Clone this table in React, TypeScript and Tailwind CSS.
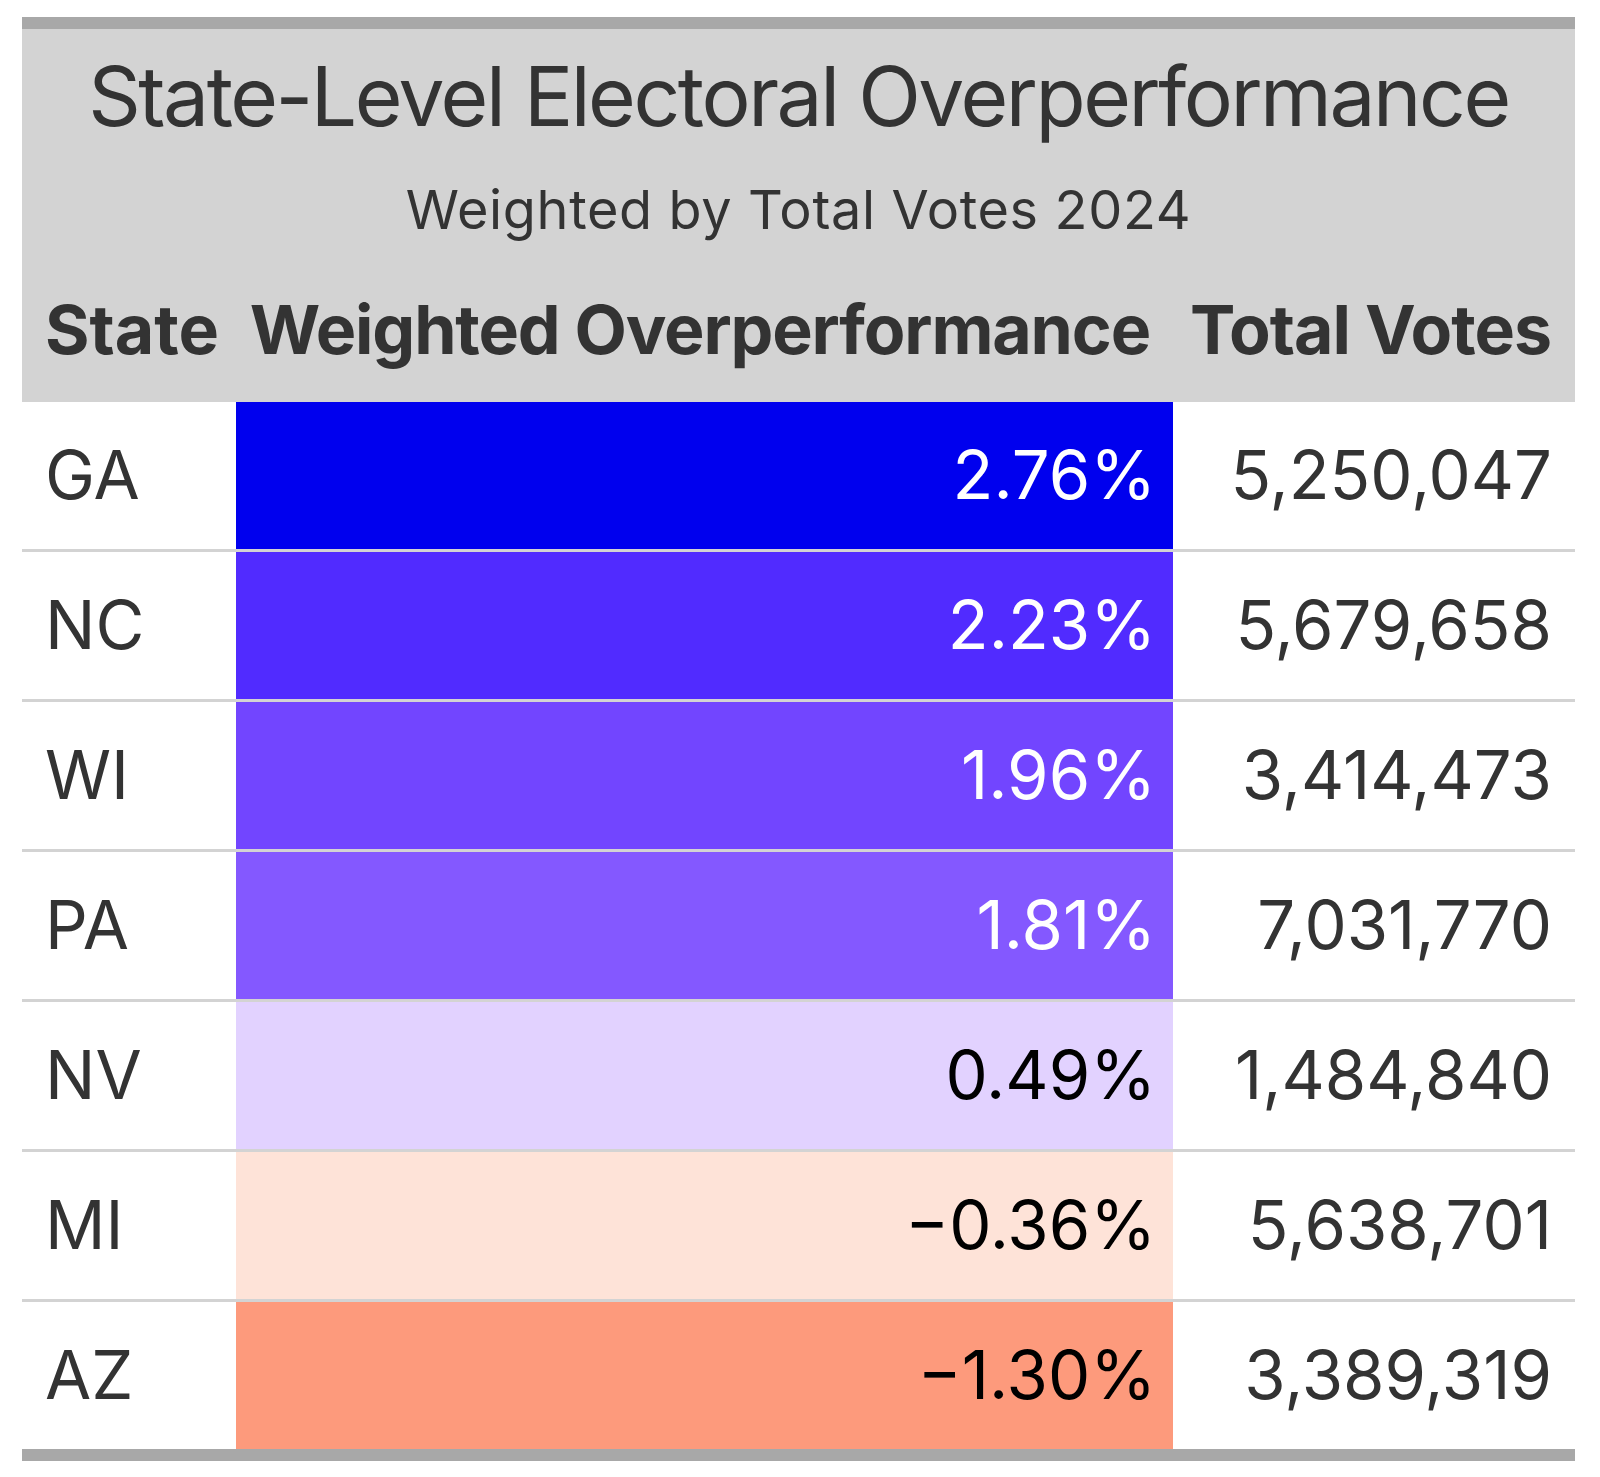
const rows = [
  { state: "GA", pct: "2.76%", votes: "5,250,047", bg: "bg-[#0000ee]", fg: "text-white" },
  { state: "NC", pct: "2.23%", votes: "5,679,658", bg: "bg-[#512bff]", fg: "text-white" },
  { state: "WI", pct: "1.96%", votes: "3,414,473", bg: "bg-[#7245ff]", fg: "text-white" },
  { state: "PA", pct: "1.81%", votes: "7,031,770", bg: "bg-[#8458ff]", fg: "text-white" },
  { state: "NV", pct: "0.49%", votes: "1,484,840", bg: "bg-[#e2d2ff]", fg: "text-black" },
  { state: "MI", pct: "\u22120.36%", votes: "5,638,701", bg: "bg-[#fee3d8]", fg: "text-black" },
  { state: "AZ", pct: "\u22121.30%", votes: "3,389,319", bg: "bg-[#fd9a7c]", fg: "text-black" },
];

export default function App() {
  return (
    <div className="min-h-screen bg-white pt-[17px] font-['Inter','Liberation_Sans',sans-serif] text-[#333333]">
      <div className="ml-[22px] w-[1553px] border-y-[12px] border-[#a8a8a8]">
        {/* heading */}
        <div className="h-[226px] bg-[#d3d3d3] pt-[27px] text-center whitespace-nowrap">
          <h1 className="text-[82px] leading-none font-normal tracking-[-0.03em]">State-Level Electoral Overperformance</h1>
          <p className="mt-[45px] text-[54px] leading-none tracking-[0.012em]">Weighted by Total Votes 2024</p>
        </div>

        {/* column labels */}
        <div className="grid h-[147px] grid-cols-[214px_937px_402px] items-center whitespace-nowrap bg-[#d3d3d3] text-[68px] font-bold">
          <div className="px-[23px]">State</div>
          <div className="flex justify-end pl-[21px] pr-[23px] tracking-[-0.017em]">
            <span>Weighted Overperformance</span>
          </div>
          <div className="flex justify-end pl-[22px] pr-[24px] tracking-[-0.015em]">
            <span>Total Votes</span>
          </div>
        </div>

        {/* body */}
        {rows.map((r, i) => (
          <div
            key={r.state}
            className={`grid h-[147px] grid-cols-[214px_937px_402px] text-[67px] ${i > 0 ? "box-content border-t-[3px] border-[#d3d3d3]" : ""}`}
          >
            <div className="flex items-center px-[23px]">{r.state}</div>
            <div className={`flex items-center justify-end px-[17px] ${r.bg} ${r.fg}`}>{r.pct}</div>
            <div className="flex items-center justify-end px-[23px]">{r.votes}</div>
          </div>
        ))}
      </div>
    </div>
  );
}
